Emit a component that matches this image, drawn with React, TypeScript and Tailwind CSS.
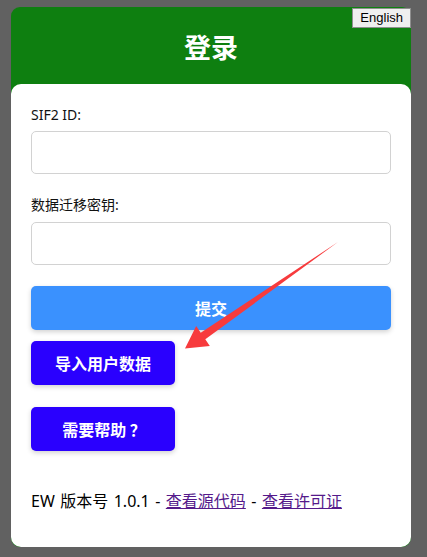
import React from 'react';

const font = { fontFamily: '"Noto Sans", "Noto Sans CJK SC", sans-serif' };
const cjk = { fontFamily: '"Noto Sans CJK SC", sans-serif' };

export default function App() {
    return (
        <div className="min-h-[557px] bg-[#616161] pt-[7px] pb-[12px]" style={font}>
            <div className="relative mx-[11px] w-[400px] rounded-[9px] bg-[#0e7f10]">
                {/* 语言切换 */}
                <button
                    className="absolute right-0 top-[1px] h-[20px] border border-[#8f8f8f] bg-[#efefef] px-[7px] text-[13px] leading-[18px] text-black"
                    style={{ fontFamily: '"Liberation Sans", Arial, sans-serif' }}
                >
                    English
                </button>
                <div className="flex h-[77px] items-center justify-center pt-[4px]">
                    <h1 className="text-[27px] font-bold text-white" style={cjk}>登录</h1>
                </div>
                <div className="rounded-[10px] bg-white px-5 pt-[21px] pb-[34px]">
                    <label className="block text-[14px] leading-[20px] text-[#111]">SIF2 ID:</label>
                    <input className="mt-[6px] block h-[43px] w-full rounded-[5px] border border-[#d2d2d2] outline-none" />
                    <label className="mt-[21px] block text-[14px] leading-[20px] text-[#111]">数据迁移密钥:</label>
                    <input className="mt-[7px] block h-[43px] w-full rounded-[5px] border border-[#d2d2d2] outline-none" />
                    <button className="mt-[21px] block h-[44px] w-full rounded-[5px] bg-[#3a91fe] text-[16px] font-bold text-white shadow-[0_2px_5px_rgba(0,0,0,0.18)]" style={cjk}>
                        提交
                    </button>
                    <button className="mt-[11px] block h-[44px] w-[144px] rounded-[5px] bg-[#2a00fe] text-[16px] font-bold text-white shadow-[0_2px_5px_rgba(0,0,0,0.18)]" style={cjk}>
                        导入用户数据
                    </button>
                    <button className="mt-[22px] block h-[44px] w-[144px] rounded-[5px] bg-[#2a00fe] pl-[2px] text-[16px] font-bold text-white shadow-[0_2px_5px_rgba(0,0,0,0.18)]" style={cjk}>
                        需要帮助 ？
                    </button>
                    <p className="mt-[38px] text-[16px] leading-[24px] text-black [word-spacing:1.3px]">
                        EW 版本号 1.0.1 - <a className="text-[#551a8b] underline" href="#">查看源代码</a> - <a className="text-[#551a8b] underline" href="#">查看许可证</a>
                    </p>
                </div>
                {/* 标注箭头 */}
                <svg
                    className="pointer-events-none absolute left-[-11px] top-[-7px]"
                    width="427"
                    height="557"
                    viewBox="0 0 427 557"
                >
                    <polygon
                        points="338,242 200.7,332.7 196.2,326.1 185,348.5 209.8,345.9 205.3,339.3"
                        fill="#f73b3d"
                    />
                </svg>
            </div>
        </div>
    );
}
